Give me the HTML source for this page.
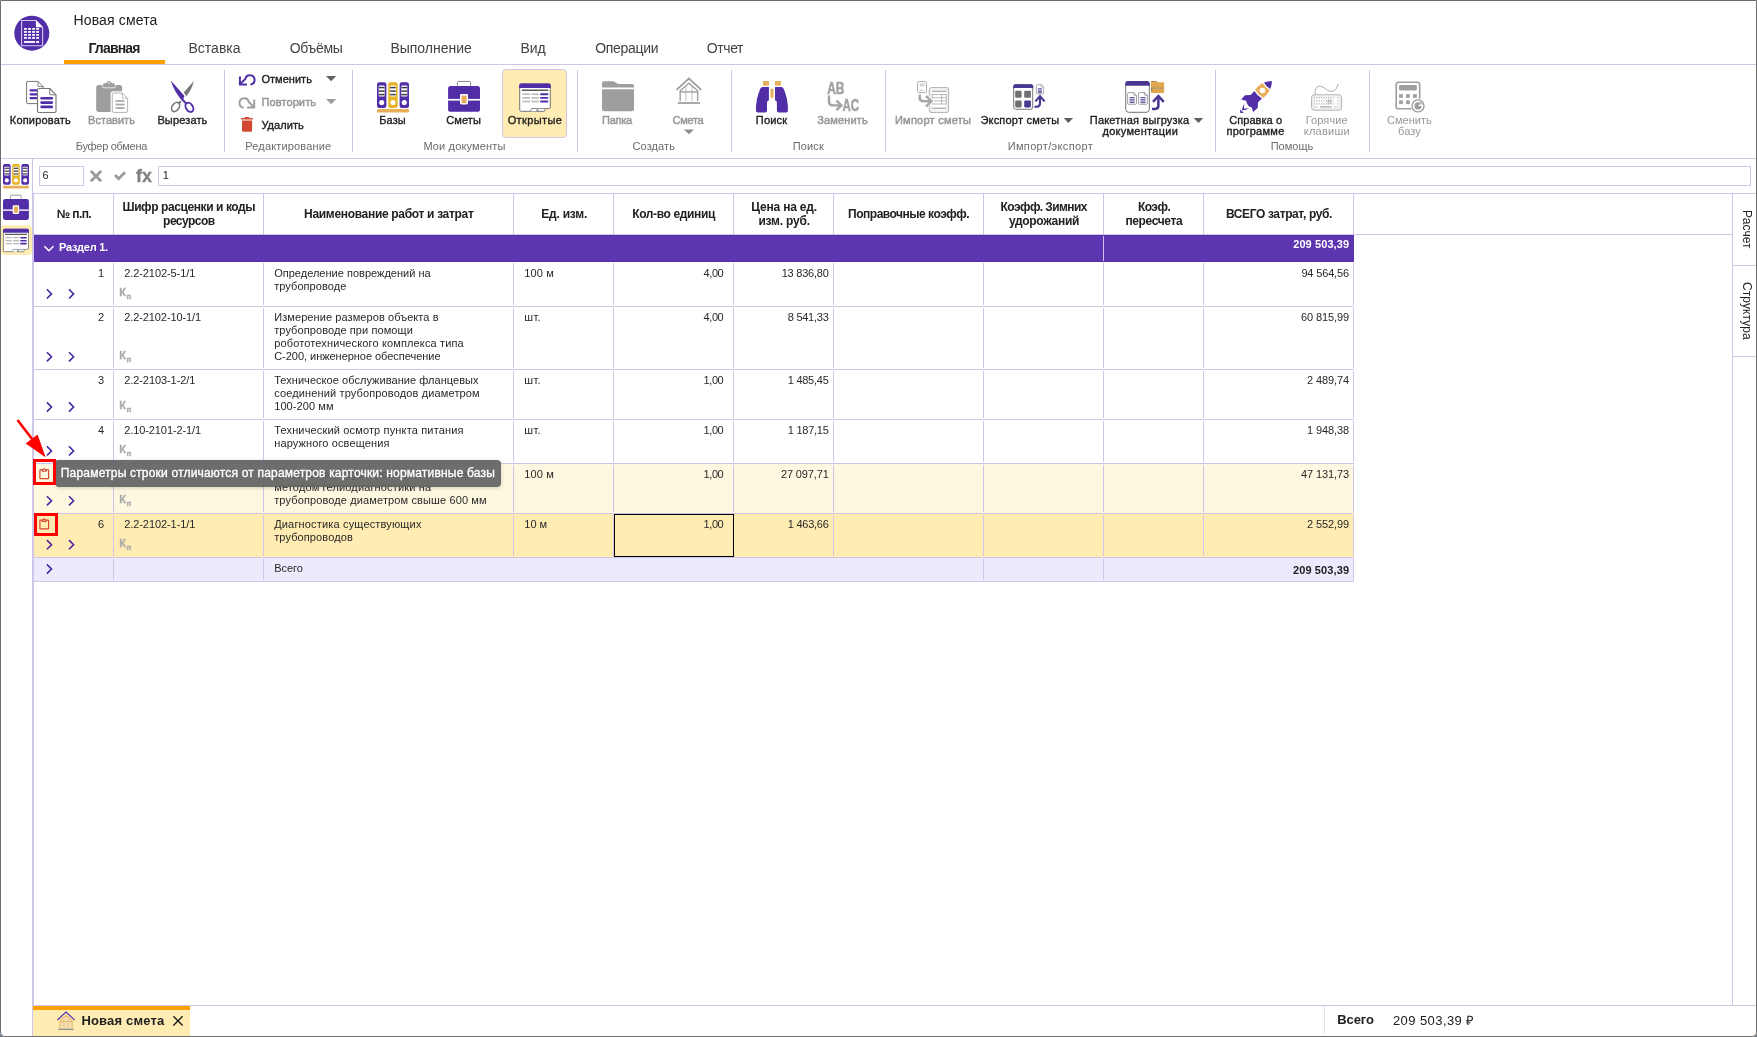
<!DOCTYPE html>
<html lang="ru"><head><meta charset="utf-8"><title>Новая смета</title>
<style>
html,body{margin:0;padding:0;background:#fff;}
body{width:1757px;height:1037px;overflow:hidden;position:relative;font-family:"Liberation Sans", sans-serif;}
#app{position:absolute;left:0;top:0;width:1757px;height:1037px;overflow:hidden;will-change:transform;}
.t{position:absolute;white-space:nowrap;font-family:"Liberation Sans", sans-serif;}
.b{position:absolute;}
.l{position:absolute;background:#d1c4e9;}
svg{position:absolute;overflow:visible;}
</style></head><body><div id="app">
<div class="b" style="left:64px;top:60px;width:101px;height:4px;background:#ffa000;"></div>
<div class="b" style="left:1px;top:64px;width:1755px;height:1px;background:#d1c4e9;"></div>
<div class="b" style="left:1px;top:158px;width:1755px;height:1px;background:#d1c4e9;"></div>
<div class="b" style="left:224px;top:70px;width:1px;height:82px;background:#d1c4e9;"></div>
<div class="b" style="left:352px;top:70px;width:1px;height:82px;background:#d1c4e9;"></div>
<div class="b" style="left:577px;top:70px;width:1px;height:82px;background:#d1c4e9;"></div>
<div class="b" style="left:731px;top:70px;width:1px;height:82px;background:#d1c4e9;"></div>
<div class="b" style="left:885px;top:70px;width:1px;height:82px;background:#d1c4e9;"></div>
<div class="b" style="left:1215px;top:70px;width:1px;height:82px;background:#d1c4e9;"></div>
<div class="b" style="left:1369px;top:70px;width:1px;height:82px;background:#d1c4e9;"></div>
<div class="b" style="left:502px;top:69px;width:63px;height:67px;background:#ffecb3;border:1px solid #d1c4e9;border-radius:4px;"></div>
<div class="b" style="left:32px;top:159px;width:1px;height:878px;background:#d1c4e9;"></div>
<div class="b" style="left:1px;top:225px;width:31px;height:30px;background:#ffecb3;border-radius:4px;"></div>
<div class="b" style="left:39px;top:166px;width:43px;height:18px;background:#fff;border:1px solid #d1c4e9;"></div>
<div class="b" style="left:158px;top:166px;width:1591px;height:18px;background:#fff;border:1px solid #d1c4e9;"></div>
<div class="b" style="left:33px;top:193px;width:1723px;height:1px;background:#d1c4e9;"></div>
<div class="b" style="left:33px;top:194px;width:1px;height:811px;background:#d1c4e9;"></div>
<div class="b" style="left:33px;top:234px;width:1699px;height:1px;background:#d1c4e9;"></div>
<div class="b" style="left:1732px;top:194px;width:1px;height:811px;background:#d1c4e9;"></div>
<div class="b" style="left:1733px;top:265px;width:23px;height:1px;background:#d1c4e9;"></div>
<div class="b" style="left:1733px;top:356px;width:23px;height:1px;background:#d1c4e9;"></div>
<div class="b" style="left:34px;top:235px;width:1320px;height:27px;background:#5e35b1;"></div>
<div class="b" style="left:34px;top:464px;width:1320px;height:49px;background:#fff8e1;"></div>
<div class="b" style="left:34px;top:514px;width:1320px;height:43px;background:#ffecb3;"></div>
<div class="b" style="left:34px;top:558px;width:1320px;height:23px;background:#eeeafd;"></div>
<div class="b" style="left:113px;top:194px;width:1px;height:40px;background:#d1c4e9;"></div>
<div class="b" style="left:263px;top:194px;width:1px;height:40px;background:#d1c4e9;"></div>
<div class="b" style="left:513px;top:194px;width:1px;height:40px;background:#d1c4e9;"></div>
<div class="b" style="left:613px;top:194px;width:1px;height:40px;background:#d1c4e9;"></div>
<div class="b" style="left:733px;top:194px;width:1px;height:40px;background:#d1c4e9;"></div>
<div class="b" style="left:833px;top:194px;width:1px;height:40px;background:#d1c4e9;"></div>
<div class="b" style="left:983px;top:194px;width:1px;height:40px;background:#d1c4e9;"></div>
<div class="b" style="left:1103px;top:194px;width:1px;height:40px;background:#d1c4e9;"></div>
<div class="b" style="left:1203px;top:194px;width:1px;height:40px;background:#d1c4e9;"></div>
<div class="b" style="left:1353px;top:194px;width:1px;height:40px;background:#d1c4e9;"></div>
<div class="b" style="left:1103px;top:235px;width:1px;height:27px;background:#cfc0ee;"></div>
<div class="b" style="left:34px;top:306px;width:1320px;height:1px;background:#d1c4e9;"></div>
<div class="b" style="left:34px;top:369px;width:1320px;height:1px;background:#d1c4e9;"></div>
<div class="b" style="left:34px;top:419px;width:1320px;height:1px;background:#d1c4e9;"></div>
<div class="b" style="left:34px;top:463px;width:1320px;height:1px;background:#d1c4e9;"></div>
<div class="b" style="left:34px;top:513px;width:1320px;height:1px;background:#d1c4e9;"></div>
<div class="b" style="left:34px;top:557px;width:1320px;height:1px;background:#d1c4e9;"></div>
<div class="b" style="left:34px;top:581px;width:1320px;height:1px;background:#d1c4e9;"></div>
<div class="b" style="left:34px;top:235px;width:1320px;height:27px;background:#5e35b1;"></div>
<div class="b" style="left:34px;top:235px;width:1320px;height:1px;background:#5430ac;"></div>
<div class="b" style="left:34px;top:261px;width:1320px;height:1px;background:#5430ac;"></div>
<div class="b" style="left:1103px;top:236px;width:1px;height:25px;background:#cfc0ee;"></div>
<div class="b" style="left:113px;top:263px;width:1px;height:42px;background:#d1c4e9;"></div>
<div class="b" style="left:263px;top:263px;width:1px;height:42px;background:#d1c4e9;"></div>
<div class="b" style="left:513px;top:263px;width:1px;height:42px;background:#d1c4e9;"></div>
<div class="b" style="left:613px;top:263px;width:1px;height:42px;background:#d1c4e9;"></div>
<div class="b" style="left:733px;top:263px;width:1px;height:42px;background:#d1c4e9;"></div>
<div class="b" style="left:833px;top:263px;width:1px;height:42px;background:#d1c4e9;"></div>
<div class="b" style="left:983px;top:263px;width:1px;height:42px;background:#d1c4e9;"></div>
<div class="b" style="left:1103px;top:263px;width:1px;height:42px;background:#d1c4e9;"></div>
<div class="b" style="left:1203px;top:263px;width:1px;height:42px;background:#d1c4e9;"></div>
<div class="b" style="left:1353px;top:263px;width:1px;height:42px;background:#d1c4e9;"></div>
<div class="b" style="left:113px;top:308px;width:1px;height:60px;background:#d1c4e9;"></div>
<div class="b" style="left:263px;top:308px;width:1px;height:60px;background:#d1c4e9;"></div>
<div class="b" style="left:513px;top:308px;width:1px;height:60px;background:#d1c4e9;"></div>
<div class="b" style="left:613px;top:308px;width:1px;height:60px;background:#d1c4e9;"></div>
<div class="b" style="left:733px;top:308px;width:1px;height:60px;background:#d1c4e9;"></div>
<div class="b" style="left:833px;top:308px;width:1px;height:60px;background:#d1c4e9;"></div>
<div class="b" style="left:983px;top:308px;width:1px;height:60px;background:#d1c4e9;"></div>
<div class="b" style="left:1103px;top:308px;width:1px;height:60px;background:#d1c4e9;"></div>
<div class="b" style="left:1203px;top:308px;width:1px;height:60px;background:#d1c4e9;"></div>
<div class="b" style="left:1353px;top:308px;width:1px;height:60px;background:#d1c4e9;"></div>
<div class="b" style="left:113px;top:371px;width:1px;height:47px;background:#d1c4e9;"></div>
<div class="b" style="left:263px;top:371px;width:1px;height:47px;background:#d1c4e9;"></div>
<div class="b" style="left:513px;top:371px;width:1px;height:47px;background:#d1c4e9;"></div>
<div class="b" style="left:613px;top:371px;width:1px;height:47px;background:#d1c4e9;"></div>
<div class="b" style="left:733px;top:371px;width:1px;height:47px;background:#d1c4e9;"></div>
<div class="b" style="left:833px;top:371px;width:1px;height:47px;background:#d1c4e9;"></div>
<div class="b" style="left:983px;top:371px;width:1px;height:47px;background:#d1c4e9;"></div>
<div class="b" style="left:1103px;top:371px;width:1px;height:47px;background:#d1c4e9;"></div>
<div class="b" style="left:1203px;top:371px;width:1px;height:47px;background:#d1c4e9;"></div>
<div class="b" style="left:1353px;top:371px;width:1px;height:47px;background:#d1c4e9;"></div>
<div class="b" style="left:113px;top:421px;width:1px;height:41px;background:#d1c4e9;"></div>
<div class="b" style="left:263px;top:421px;width:1px;height:41px;background:#d1c4e9;"></div>
<div class="b" style="left:513px;top:421px;width:1px;height:41px;background:#d1c4e9;"></div>
<div class="b" style="left:613px;top:421px;width:1px;height:41px;background:#d1c4e9;"></div>
<div class="b" style="left:733px;top:421px;width:1px;height:41px;background:#d1c4e9;"></div>
<div class="b" style="left:833px;top:421px;width:1px;height:41px;background:#d1c4e9;"></div>
<div class="b" style="left:983px;top:421px;width:1px;height:41px;background:#d1c4e9;"></div>
<div class="b" style="left:1103px;top:421px;width:1px;height:41px;background:#d1c4e9;"></div>
<div class="b" style="left:1203px;top:421px;width:1px;height:41px;background:#d1c4e9;"></div>
<div class="b" style="left:1353px;top:421px;width:1px;height:41px;background:#d1c4e9;"></div>
<div class="b" style="left:113px;top:465px;width:1px;height:47px;background:#d1c4e9;"></div>
<div class="b" style="left:263px;top:465px;width:1px;height:47px;background:#d1c4e9;"></div>
<div class="b" style="left:513px;top:465px;width:1px;height:47px;background:#d1c4e9;"></div>
<div class="b" style="left:613px;top:465px;width:1px;height:47px;background:#d1c4e9;"></div>
<div class="b" style="left:733px;top:465px;width:1px;height:47px;background:#d1c4e9;"></div>
<div class="b" style="left:833px;top:465px;width:1px;height:47px;background:#d1c4e9;"></div>
<div class="b" style="left:983px;top:465px;width:1px;height:47px;background:#d1c4e9;"></div>
<div class="b" style="left:1103px;top:465px;width:1px;height:47px;background:#d1c4e9;"></div>
<div class="b" style="left:1203px;top:465px;width:1px;height:47px;background:#d1c4e9;"></div>
<div class="b" style="left:1353px;top:465px;width:1px;height:47px;background:#d1c4e9;"></div>
<div class="b" style="left:113px;top:515px;width:1px;height:41px;background:#d1c4e9;"></div>
<div class="b" style="left:263px;top:515px;width:1px;height:41px;background:#d1c4e9;"></div>
<div class="b" style="left:513px;top:515px;width:1px;height:41px;background:#d1c4e9;"></div>
<div class="b" style="left:613px;top:515px;width:1px;height:41px;background:#d1c4e9;"></div>
<div class="b" style="left:733px;top:515px;width:1px;height:41px;background:#d1c4e9;"></div>
<div class="b" style="left:833px;top:515px;width:1px;height:41px;background:#d1c4e9;"></div>
<div class="b" style="left:983px;top:515px;width:1px;height:41px;background:#d1c4e9;"></div>
<div class="b" style="left:1103px;top:515px;width:1px;height:41px;background:#d1c4e9;"></div>
<div class="b" style="left:1203px;top:515px;width:1px;height:41px;background:#d1c4e9;"></div>
<div class="b" style="left:1353px;top:515px;width:1px;height:41px;background:#d1c4e9;"></div>
<div class="b" style="left:113px;top:559px;width:1px;height:21px;background:#d1c4e9;"></div>
<div class="b" style="left:263px;top:559px;width:1px;height:21px;background:#d1c4e9;"></div>
<div class="b" style="left:983px;top:559px;width:1px;height:21px;background:#d1c4e9;"></div>
<div class="b" style="left:1103px;top:559px;width:1px;height:21px;background:#d1c4e9;"></div>
<div class="b" style="left:1353px;top:559px;width:1px;height:21px;background:#d1c4e9;"></div>
<div class="b" style="left:614px;top:514px;width:118px;height:41px;background:transparent;border:1px solid #000;"></div>
<div class="b" style="left:33px;top:1005px;width:1723px;height:1px;background:#d1c4e9;"></div>
<div class="b" style="left:33px;top:1006px;width:157px;height:4px;background:#ffa000;"></div>
<div class="b" style="left:33px;top:1010px;width:157px;height:26px;background:#ffecb3;"></div>
<div class="b" style="left:1324px;top:1006px;width:1px;height:28px;background:#e4e4e4;"></div>
<svg style="left:0;top:0;z-index:5" width="1757" height="1037" viewBox="0 0 1757 1037"><circle cx="31.8" cy="33.2" r="17.5" fill="#512da8"/><path d="M21.6,20.5 L35.9,20.5 L42.6,27.2 L42.6,45.8 L21.6,45.8 Z" fill="none" stroke="#d4c9ef" stroke-width="1.1" stroke-linejoin="round"/><path d="M35.9,20.5 L42.6,27.2 L35.9,27.2 Z" fill="#fff"/><rect x="24.00" y="28.05" width="2.9" height="1.75" fill="#fff"/><rect x="28.05" y="28.05" width="2.9" height="1.75" fill="#fff"/><rect x="32.10" y="28.05" width="2.9" height="1.75" fill="#fff"/><rect x="36.15" y="28.05" width="2.9" height="1.75" fill="#fff"/><rect x="24.00" y="31.05" width="2.9" height="1.75" fill="#fff"/><rect x="28.05" y="31.05" width="2.9" height="1.75" fill="#fff"/><rect x="32.10" y="31.05" width="2.9" height="1.75" fill="#fff"/><rect x="36.15" y="31.05" width="2.9" height="1.75" fill="#fff"/><rect x="24.00" y="34.05" width="2.9" height="1.75" fill="#fff"/><rect x="28.05" y="34.05" width="2.9" height="1.75" fill="#fff"/><rect x="32.10" y="34.05" width="2.9" height="1.75" fill="#fff"/><rect x="36.15" y="34.05" width="2.9" height="1.75" fill="#fff"/><rect x="24.00" y="37.05" width="2.9" height="1.75" fill="#fff"/><rect x="28.05" y="37.05" width="2.9" height="1.75" fill="#fff"/><rect x="32.10" y="37.05" width="2.9" height="1.75" fill="#fff"/><rect x="36.15" y="37.05" width="2.9" height="1.75" fill="#fff"/><rect x="24" y="41.05" width="11" height="1.85" fill="#fff"/><rect x="36.15" y="41.05" width="2.9" height="1.85" fill="#fff"/>
<path d="M28.1,81.4 L38.0,81.4 L43.2,86.60000000000001 L43.2,102.1 Q43.2,103.6 41.7,103.6 L28.1,103.6 Q26.6,103.6 26.6,102.1 L26.6,82.9 Q26.6,81.4 28.1,81.4 Z" fill="#fff" stroke="#757575" stroke-width="1" stroke-linejoin="round"/><path d="M38.0,81.4 L38.0,86.00000000000001 Q38.0,86.60000000000001 38.6,86.60000000000001 L43.2,86.60000000000001" fill="none" stroke="#757575" stroke-width="0.9"/><line x1="30.6" y1="90.4" x2="41" y2="90.4" stroke="#512da8" stroke-width="2.3" stroke-linecap="round"/><line x1="30.6" y1="94.3" x2="41" y2="94.3" stroke="#512da8" stroke-width="2.3" stroke-linecap="round"/><line x1="30.6" y1="98.2" x2="41" y2="98.2" stroke="#512da8" stroke-width="2.3" stroke-linecap="round"/><path d="M39.0,88.5 L49.7,88.5 L56.0,94.8 L56.0,111.0 Q56.0,112.5 54.5,112.5 L39.0,112.5 Q37.5,112.5 37.5,111.0 L37.5,90.0 Q37.5,88.5 39.0,88.5 Z" fill="#fff" stroke="#757575" stroke-width="1.1" stroke-linejoin="round"/><path d="M49.7,88.5 L49.7,94.2 Q49.7,94.8 50.300000000000004,94.8 L56.0,94.8" fill="none" stroke="#757575" stroke-width="0.9900000000000001"/><line x1="41.6" y1="98.2" x2="51.8" y2="98.2" stroke="#512da8" stroke-width="2.6" stroke-linecap="round"/><line x1="41.6" y1="102.6" x2="51.8" y2="102.6" stroke="#512da8" stroke-width="2.6" stroke-linecap="round"/><line x1="41.6" y1="106.9" x2="51.8" y2="106.9" stroke="#512da8" stroke-width="2.6" stroke-linecap="round"/>
<rect x="96.2" y="84.9" width="25.9" height="27" rx="2.6" fill="#9e9e9e"/><path d="M103,86.6 L103,84.6 Q103,83.4 104.4,83.2 L106.4,83 Q107,81 108.9,81 Q110.9,81 111.4,83 L113.5,83.2 Q114.9,83.4 114.9,84.6 L114.9,86.6 Q114.9,87.6 113.6,87.6 L104.3,87.6 Q103,87.6 103,86.6 Z" fill="#9e9e9e" stroke="#fff" stroke-width="1.3" paint-order="stroke"/><circle cx="108.9" cy="83.1" r="0.8" fill="#fff"/><rect x="110.6" y="91.3" width="18.6" height="22.7" rx="2.5" fill="#fff"/><path d="M113.8,93.0 L122.39999999999999,93.0 L127.6,98.2 L127.6,110.9 Q127.6,112.4 126.1,112.4 L113.8,112.4 Q112.3,112.4 112.3,110.9 L112.3,94.5 Q112.3,93.0 113.8,93.0 Z" fill="#fff" stroke="#b4b4b4" stroke-width="1.0" stroke-linejoin="round"/><path d="M122.39999999999999,93.0 L122.39999999999999,97.60000000000001 Q122.39999999999999,98.2 122.99999999999999,98.2 L127.6,98.2" fill="none" stroke="#b4b4b4" stroke-width="0.9"/><line x1="115.5" y1="101.0" x2="124.6" y2="101.0" stroke="#a6a6a6" stroke-width="1.7" stroke-linecap="butt"/><line x1="115.5" y1="104.5" x2="124.6" y2="104.5" stroke="#a6a6a6" stroke-width="1.7" stroke-linecap="butt"/><line x1="115.5" y1="108.1" x2="124.6" y2="108.1" stroke="#a6a6a6" stroke-width="1.7" stroke-linecap="butt"/>
<path d="M193.8,80.9 L183.7,92.4 L186.4,96.2 Q192.2,88.6 193.8,80.9 Z" fill="#787878"/><path d="M181.0,101.2 L178.6,103.4" stroke="#787878" stroke-width="2.0" fill="none"/><ellipse cx="175.6" cy="107.0" rx="3.4" ry="5.1" transform="rotate(36 175.6 107.0)" fill="none" stroke="#787878" stroke-width="1.6"/><path d="M170.8,80.6 L184.5,95.9 L183.6,97.9 L183.4,99.0 L186.6,102.8 L185.2,104.0 L181.0,99.6 Q177.6,95.0 175.5,91.4 Q172.6,86.6 170.8,80.6 Z" fill="#512da8"/><ellipse cx="189.4" cy="107.3" rx="3.4" ry="5.0" transform="rotate(-33 189.4 107.3)" fill="none" stroke="#512da8" stroke-width="1.9"/>
<path d="M251.3,84.4 A4.7,4.7 0 1 0 245.3,78.9 L240.4,83.9" fill="none" stroke="#512da8" stroke-width="2.0" stroke-linecap="round"/><path d="M239.9,76.6 L239.9,84.5 L247.0,84.5" fill="none" stroke="#512da8" stroke-width="2.0" stroke-linecap="butt" stroke-linejoin="miter"/><path d="M242.8,107.5 A4.7,4.7 0 1 1 248.8,102.0 L253.7,106.9" fill="none" stroke="#9e9e9e" stroke-width="2.0" stroke-linecap="round"/><path d="M254.2,99.5 L254.2,107.5 L247.1,107.5" fill="none" stroke="#9e9e9e" stroke-width="2.0" stroke-linecap="butt" stroke-linejoin="miter"/><rect x="240.9" y="117.9" width="12.0" height="1.7" rx="0.5" fill="#d1472f"/><rect x="244.7" y="117.0" width="4.4" height="1.4" rx="0.6" fill="#d1472f"/><path d="M242,120.6 L252.1,120.6 L252.1,130.2 Q252.1,131.8 250.5,131.8 L243.6,131.8 Q242,131.8 242,130.2 Z" fill="#d1472f"/><path d="M326.0,76.0 L336.2,76.0 L331.1,81.3 Z" fill="#616161"/><path d="M326.0,99.0 L336.2,99.0 L331.1,104.2 Z" fill="#9e9e9e"/>
<rect x="377.0" y="82.2" width="9.4" height="25.8" rx="2.2" fill="#512da8"/><rect x="378.7" y="85.6" width="6.0" height="10.9" rx="0.8" fill="#fff"/><line x1="378.9" y1="87.6" x2="384.5" y2="87.6" stroke="#3c3c3c" stroke-width="1.5" stroke-linecap="butt"/><line x1="378.9" y1="91.1" x2="384.5" y2="91.1" stroke="#3c3c3c" stroke-width="1.5" stroke-linecap="butt"/><line x1="378.9" y1="94.6" x2="384.5" y2="94.6" stroke="#3c3c3c" stroke-width="1.5" stroke-linecap="butt"/><circle cx="381.7" cy="102.5" r="2.55" fill="#fff"/><rect x="388.25" y="82.2" width="9.4" height="25.8" rx="2.2" fill="#e6b422"/><rect x="389.95" y="85.6" width="6.0" height="10.9" rx="0.8" fill="#fff"/><line x1="390.15" y1="87.6" x2="395.75" y2="87.6" stroke="#3c3c3c" stroke-width="1.5" stroke-linecap="butt"/><line x1="390.15" y1="91.1" x2="395.75" y2="91.1" stroke="#3c3c3c" stroke-width="1.5" stroke-linecap="butt"/><line x1="390.15" y1="94.6" x2="395.75" y2="94.6" stroke="#3c3c3c" stroke-width="1.5" stroke-linecap="butt"/><circle cx="392.95" cy="102.5" r="2.55" fill="#fff"/><rect x="399.6" y="82.2" width="9.4" height="25.8" rx="2.2" fill="#512da8"/><rect x="401.3" y="85.6" width="6.0" height="10.9" rx="0.8" fill="#fff"/><line x1="401.5" y1="87.6" x2="407.1" y2="87.6" stroke="#3c3c3c" stroke-width="1.5" stroke-linecap="butt"/><line x1="401.5" y1="91.1" x2="407.1" y2="91.1" stroke="#3c3c3c" stroke-width="1.5" stroke-linecap="butt"/><line x1="401.5" y1="94.6" x2="407.1" y2="94.6" stroke="#3c3c3c" stroke-width="1.5" stroke-linecap="butt"/><circle cx="404.3" cy="102.5" r="2.55" fill="#fff"/><rect x="377" y="109.1" width="32" height="3.5" rx="1.2" fill="#e8ae5b"/>
<path d="M457.4,85.6 L457.4,82.8 Q457.4,81.4 458.8,81.4 L469.2,81.4 Q470.6,81.4 470.6,82.8 L470.6,85.6" fill="none" stroke="#757575" stroke-width="0.9"/><rect x="448.1" y="86.1" width="31.9" height="25.7" rx="2.6" fill="#512da8"/><rect x="448.1" y="98.9" width="31.9" height="1.7" fill="#fff"/><rect x="460.0" y="93.9" width="8.0" height="10.6" rx="1.4" fill="#fff"/><rect x="461.6" y="95.4" width="5.0" height="7.7" rx="0.6" fill="#e8ae5b"/>
<path d="M521.2,83.9 L548.8,83.9 Q550.3,83.9 550.3,85.4 L550.3,107.0 Q550.3,108.5 548.8,108.5 L545.5,108.5 L544.3,111.3 L521.2,111.3 Q519.7,111.3 519.7,109.8 L519.7,85.4 Q519.7,83.9 521.2,83.9 Z" fill="#fff" stroke="#757575" stroke-width="1"/><path d="M519.2,88.1 L519.2,85.4 Q519.2,83.4 521.2,83.4 L548.8,83.4 Q550.8,83.4 550.8,85.4 L550.8,88.1 Z" fill="#512da8"/><line x1="522.4" y1="90.3" x2="547.7" y2="90.3" stroke="#5a5a5a" stroke-width="1.6" stroke-linecap="round"/><line x1="522.2" y1="94.2" x2="530.0" y2="94.2" stroke="#bdbdbd" stroke-width="1.7" stroke-linecap="butt"/><line x1="531.5" y1="94.2" x2="538.9" y2="94.2" stroke="#bdbdbd" stroke-width="1.7" stroke-linecap="butt"/><line x1="541.0" y1="94.2" x2="547.4" y2="94.2" stroke="#512da8" stroke-width="1.9" stroke-linecap="round"/><line x1="522.2" y1="97.9" x2="530.0" y2="97.9" stroke="#bdbdbd" stroke-width="1.7" stroke-linecap="butt"/><line x1="531.5" y1="97.9" x2="538.9" y2="97.9" stroke="#bdbdbd" stroke-width="1.7" stroke-linecap="butt"/><line x1="541.0" y1="97.9" x2="547.4" y2="97.9" stroke="#512da8" stroke-width="1.9" stroke-linecap="round"/><line x1="522.2" y1="101.5" x2="530.0" y2="101.5" stroke="#bdbdbd" stroke-width="1.7" stroke-linecap="butt"/><line x1="531.5" y1="101.5" x2="538.9" y2="101.5" stroke="#bdbdbd" stroke-width="1.7" stroke-linecap="butt"/><line x1="541.0" y1="101.5" x2="547.4" y2="101.5" stroke="#512da8" stroke-width="1.9" stroke-linecap="round"/><path d="M530.6,111.3 L531.6,108.5 L537.6,108.5 L536.6,111.3" fill="#fff" stroke="#757575" stroke-width="0.8"/><path d="M537.4,111.3 L538.4,108.5 L545.0,108.5" fill="none" stroke="#757575" stroke-width="0.8"/>
<g transform="translate(3.0,163.9) scale(0.812) translate(-377,-82.2)"><rect x="377.0" y="82.2" width="9.4" height="25.8" rx="2.2" fill="#512da8"/><rect x="378.7" y="85.6" width="6.0" height="10.9" rx="0.8" fill="#fff"/><line x1="378.9" y1="87.6" x2="384.5" y2="87.6" stroke="#3c3c3c" stroke-width="1.5" stroke-linecap="butt"/><line x1="378.9" y1="91.1" x2="384.5" y2="91.1" stroke="#3c3c3c" stroke-width="1.5" stroke-linecap="butt"/><line x1="378.9" y1="94.6" x2="384.5" y2="94.6" stroke="#3c3c3c" stroke-width="1.5" stroke-linecap="butt"/><circle cx="381.7" cy="102.5" r="2.55" fill="#fff"/><rect x="388.25" y="82.2" width="9.4" height="25.8" rx="2.2" fill="#e6b422"/><rect x="389.95" y="85.6" width="6.0" height="10.9" rx="0.8" fill="#fff"/><line x1="390.15" y1="87.6" x2="395.75" y2="87.6" stroke="#3c3c3c" stroke-width="1.5" stroke-linecap="butt"/><line x1="390.15" y1="91.1" x2="395.75" y2="91.1" stroke="#3c3c3c" stroke-width="1.5" stroke-linecap="butt"/><line x1="390.15" y1="94.6" x2="395.75" y2="94.6" stroke="#3c3c3c" stroke-width="1.5" stroke-linecap="butt"/><circle cx="392.95" cy="102.5" r="2.55" fill="#fff"/><rect x="399.6" y="82.2" width="9.4" height="25.8" rx="2.2" fill="#512da8"/><rect x="401.3" y="85.6" width="6.0" height="10.9" rx="0.8" fill="#fff"/><line x1="401.5" y1="87.6" x2="407.1" y2="87.6" stroke="#3c3c3c" stroke-width="1.5" stroke-linecap="butt"/><line x1="401.5" y1="91.1" x2="407.1" y2="91.1" stroke="#3c3c3c" stroke-width="1.5" stroke-linecap="butt"/><line x1="401.5" y1="94.6" x2="407.1" y2="94.6" stroke="#3c3c3c" stroke-width="1.5" stroke-linecap="butt"/><circle cx="404.3" cy="102.5" r="2.55" fill="#fff"/><rect x="377" y="109.1" width="32" height="3.5" rx="1.2" fill="#e8ae5b"/></g>
<g transform="translate(3.0,194.9) scale(0.812) translate(-448.1,-81.0)"><path d="M457.4,85.6 L457.4,82.8 Q457.4,81.4 458.8,81.4 L469.2,81.4 Q470.6,81.4 470.6,82.8 L470.6,85.6" fill="none" stroke="#757575" stroke-width="0.9"/><rect x="448.1" y="86.1" width="31.9" height="25.7" rx="2.6" fill="#512da8"/><rect x="448.1" y="98.9" width="31.9" height="1.7" fill="#fff"/><rect x="460.0" y="93.9" width="8.0" height="10.6" rx="1.4" fill="#fff"/><rect x="461.6" y="95.4" width="5.0" height="7.7" rx="0.6" fill="#e8ae5b"/></g>
<g transform="translate(3.0,228.8) scale(0.82) translate(-519.2,-83.4)"><path d="M521.2,83.9 L548.8,83.9 Q550.3,83.9 550.3,85.4 L550.3,107.0 Q550.3,108.5 548.8,108.5 L545.5,108.5 L544.3,111.3 L521.2,111.3 Q519.7,111.3 519.7,109.8 L519.7,85.4 Q519.7,83.9 521.2,83.9 Z" fill="#fff" stroke="#757575" stroke-width="1"/><path d="M519.2,88.1 L519.2,85.4 Q519.2,83.4 521.2,83.4 L548.8,83.4 Q550.8,83.4 550.8,85.4 L550.8,88.1 Z" fill="#512da8"/><line x1="522.4" y1="90.3" x2="547.7" y2="90.3" stroke="#5a5a5a" stroke-width="1.6" stroke-linecap="round"/><line x1="522.2" y1="94.2" x2="530.0" y2="94.2" stroke="#bdbdbd" stroke-width="1.7" stroke-linecap="butt"/><line x1="531.5" y1="94.2" x2="538.9" y2="94.2" stroke="#bdbdbd" stroke-width="1.7" stroke-linecap="butt"/><line x1="541.0" y1="94.2" x2="547.4" y2="94.2" stroke="#512da8" stroke-width="1.9" stroke-linecap="round"/><line x1="522.2" y1="97.9" x2="530.0" y2="97.9" stroke="#bdbdbd" stroke-width="1.7" stroke-linecap="butt"/><line x1="531.5" y1="97.9" x2="538.9" y2="97.9" stroke="#bdbdbd" stroke-width="1.7" stroke-linecap="butt"/><line x1="541.0" y1="97.9" x2="547.4" y2="97.9" stroke="#512da8" stroke-width="1.9" stroke-linecap="round"/><line x1="522.2" y1="101.5" x2="530.0" y2="101.5" stroke="#bdbdbd" stroke-width="1.7" stroke-linecap="butt"/><line x1="531.5" y1="101.5" x2="538.9" y2="101.5" stroke="#bdbdbd" stroke-width="1.7" stroke-linecap="butt"/><line x1="541.0" y1="101.5" x2="547.4" y2="101.5" stroke="#512da8" stroke-width="1.9" stroke-linecap="round"/><path d="M530.6,111.3 L531.6,108.5 L537.6,108.5 L536.6,111.3" fill="#fff" stroke="#757575" stroke-width="0.8"/><path d="M537.4,111.3 L538.4,108.5 L545.0,108.5" fill="none" stroke="#757575" stroke-width="0.8"/></g>
<path d="M602,87.5 L602,83.3 Q602,81.3 604,81.3 L612.6,81.3 Q614,81.3 615.2,82.2 L617.4,83.6 Q618.2,84 619.2,84 L632,84 Q634,84 634,86 L634,87.5 Z" fill="#9e9e9e"/><path d="M602,89.3 L634,89.3 L634,109.0 Q634,111.2 631.8,111.2 L604.2,111.2 Q602,111.2 602,109.0 Z" fill="#9e9e9e"/>
<path d="M685.9,86.6 L685.9,100.9" stroke="#cccccc" stroke-width="1.3"/><path d="M692.0,86.6 L692.0,100.9" stroke="#cccccc" stroke-width="1.3"/><path d="M676.5,89.9 L688.9,78.5 L701.3,89.9" fill="none" stroke="#a0a0a0" stroke-width="1.7" stroke-linejoin="miter"/><path d="M680.2,100.9 L680.2,90.8 L689.0,83.3 L697.7,90.8 L697.7,100.9" fill="none" stroke="#a3a3a3" stroke-width="1.45"/><path d="M680.2,91.9 L697.7,91.9" stroke="#a3a3a3" stroke-width="1.5"/><rect x="677.9" y="102.1" width="22.1" height="1.8" fill="#a0a0a0"/>
<path d="M683.9,129.4 L694.0,129.4 L688.95,134.2 Z" fill="#8e8e8e"/>
<g transform="translate(57.4,1012.4) scale(0.7) translate(-676.6,-78.9)"><path d="M680,101.5 L680,90.4 L688.9,83.2 L697.9,90.4 L697.9,101.5 Z" fill="#f6dcae"/><path d="M685.9,86.6 L685.9,100.9" stroke="#eccb92" stroke-width="1.3"/><path d="M692.0,86.6 L692.0,100.9" stroke="#eccb92" stroke-width="1.3"/><path d="M676.5,89.9 L688.9,78.5 L701.3,89.9" fill="none" stroke="#512da8" stroke-width="1.7" stroke-linejoin="miter"/><path d="M680.2,100.9 L680.2,90.8 L689.0,83.3 L697.7,90.8 L697.7,100.9" fill="none" stroke="#e7b96e" stroke-width="1.45"/><path d="M680.2,91.9 L697.7,91.9" stroke="#e7b96e" stroke-width="1.5"/><rect x="677.9" y="102.1" width="22.1" height="1.8" fill="#8a8a8a"/></g>
<rect x="762.9" y="81.0" width="6.0" height="4.7" fill="#e8ae5b"/><rect x="774.9" y="81.0" width="6.0" height="4.7" fill="#e8ae5b"/><rect x="770.5" y="88.7" width="3.0" height="9.0" fill="#e8ae5b"/><path d="M762.6,86.9 L768.9,86.9 L768.9,100.2 Q767.2,100.6 767.0,102.4 L767.0,110.6 Q767.0,112.6 765.0,112.6 L757.9,112.6 Q755.9,112.6 755.9,110.6 Q755.9,98.0 760.4,88.4 Q761.0,86.9 762.6,86.9 Z" fill="#512da8"/><path d="M781.3,86.9 L775.0,86.9 L775.0,100.2 Q776.7,100.6 776.9,102.4 L776.9,110.6 Q776.9,112.6 778.9,112.6 L786.0,112.6 Q788.0,112.6 788.0,110.6 Q788.0,98.0 783.5,88.4 Q782.9,86.9 781.3,86.9 Z" fill="#512da8"/>
<text x="827.2" y="93.5" font-family='"Liberation Sans", sans-serif' font-weight="bold" font-size="15.6" fill="#a3a3a3" stroke="#a3a3a3" stroke-width="0.55" textLength="17.2" lengthAdjust="spacingAndGlyphs">AB</text><text x="842.5" y="110.6" font-family='"Liberation Sans", sans-serif' font-weight="bold" font-size="15.6" fill="#a3a3a3" stroke="#a3a3a3" stroke-width="0.55" textLength="16.6" lengthAdjust="spacingAndGlyphs">AC</text><path d="M829.0,95.6 L829.0,101.6 Q829.0,105.4 832.8,105.4 L840.6,105.4" fill="none" stroke="#a3a3a3" stroke-width="2.4"/><path d="M836.4,100.6 L841.4,105.4 L836.4,110.2" fill="none" stroke="#a3a3a3" stroke-width="2.4"/>
<rect x="917.6" y="81.5" width="8.9" height="11.0" rx="1.3" fill="#fff" stroke="#a6a6a6" stroke-width="0.9"/><line x1="919.7" y1="84.0" x2="924.6" y2="84.0" stroke="#b4b4b4" stroke-width="0.9" stroke-linecap="butt"/><line x1="919.7" y1="85.8" x2="924.6" y2="85.8" stroke="#b4b4b4" stroke-width="0.9" stroke-linecap="butt"/><line x1="919.7" y1="90.2" x2="923.6" y2="90.2" stroke="#b4b4b4" stroke-width="0.9" stroke-linecap="butt"/><rect x="929.3" y="87.5" width="19.3" height="25.0" rx="2.8" fill="#fff" stroke="#b8b8b8" stroke-width="1.1"/><rect x="930.8" y="89.0" width="16.3" height="22.0" rx="1.8" fill="none" stroke="#d6d6d6" stroke-width="0.7"/><line x1="932.2" y1="91.3" x2="946.2" y2="91.3" stroke="#aaaaaa" stroke-width="1.3" stroke-linecap="butt"/><line x1="932.2" y1="108.3" x2="946.2" y2="108.3" stroke="#aaaaaa" stroke-width="1.3" stroke-linecap="butt"/><rect x="932.2" y="94.6" width="14.0" height="9.4" fill="none" stroke="#aaaaaa" stroke-width="0.8"/><line x1="932.2" y1="97.7" x2="946.2" y2="97.7" stroke="#aaaaaa" stroke-width="0.8" stroke-linecap="butt"/><line x1="932.2" y1="100.9" x2="946.2" y2="100.9" stroke="#aaaaaa" stroke-width="0.8" stroke-linecap="butt"/><path d="M941.6,94.6 L941.6,104.0" stroke="#aaaaaa" stroke-width="0.8"/><path d="M925.4,95.2 L931.4,101.2 L925.4,107.2" fill="none" stroke="#fff" stroke-width="4.4"/><path d="M919.7,94.6 L919.7,97.6 Q919.7,101.2 923.3,101.2 L930.2,101.2" fill="none" stroke="#a6a6a6" stroke-width="2.5"/><path d="M926.0,95.8 L931.4,101.2 L926.0,106.6" fill="none" stroke="#a6a6a6" stroke-width="2.5"/>
<rect x="1013.7" y="84.7" width="19.0" height="24.6" rx="2.2" fill="#fff" stroke="#757575" stroke-width="1"/><path d="M1013.2,87.9 L1013.2,86.2 Q1013.2,84.2 1015.2,84.2 L1031.2,84.2 Q1033.2,84.2 1033.2,86.2 L1033.2,87.9 Z" fill="#4a3791"/><rect x="1015.2" y="90.7" width="6.4" height="7.1" rx="1.1" fill="#6e6e73"/><rect x="1024.2" y="90.7" width="6.7" height="7.1" rx="1.1" fill="#6e6e73"/><rect x="1015.2" y="100.4" width="6.4" height="7.0" rx="1.1" fill="#6e6e73"/><rect x="1024.2" y="100.4" width="6.7" height="7.0" rx="1.1" fill="#4a3791"/><path d="M1037.3,84.6 L1041.1999999999998,84.6 L1043.6,87.0 L1043.6,93.0 Q1043.6,94.0 1042.6,94.0 L1037.3,94.0 Q1036.3,94.0 1036.3,93.0 L1036.3,85.6 Q1036.3,84.6 1037.3,84.6 Z" fill="#fff" stroke="#9a9a9a" stroke-width="0.8" stroke-linejoin="round"/><path d="M1041.1999999999998,84.6 L1041.1999999999998,86.4 Q1041.1999999999998,87.0 1041.7999999999997,87.0 L1043.6,87.0" fill="none" stroke="#9a9a9a" stroke-width="0.7200000000000001"/><line x1="1037.8" y1="88.7" x2="1042.0" y2="88.7" stroke="#4a3791" stroke-width="0.8" stroke-linecap="butt"/><line x1="1037.8" y1="90.1" x2="1042.0" y2="90.1" stroke="#4a3791" stroke-width="0.8" stroke-linecap="butt"/><line x1="1037.8" y1="91.5" x2="1042.0" y2="91.5" stroke="#4a3791" stroke-width="0.8" stroke-linecap="butt"/><line x1="1037.8" y1="92.7" x2="1042.0" y2="92.7" stroke="#4a3791" stroke-width="0.8" stroke-linecap="butt"/><path d="M1034.4,106.7 L1036.8,106.7 Q1040.0,106.7 1040.0,103.3 L1040.0,96.8" fill="none" stroke="#4a3791" stroke-width="2.1"/><path d="M1035.4,101.4 L1040.0,96.19999999999999 L1044.6,101.4" fill="none" stroke="#4a3791" stroke-width="2.1" stroke-linejoin="miter"/>
<path d="M1063.7,118.1 L1073.1,118.1 L1068.4,123.0 Z" fill="#5f5f5f"/>
<rect x="1125.7" y="81.5" width="23.6" height="30.8" rx="3.0" fill="#fff" stroke="#757575" stroke-width="1"/><path d="M1125.2,85.8 L1125.2,84.0 Q1125.2,81.0 1128.2,81.0 L1146.8,81.0 Q1149.8,81.0 1149.8,84.0 L1149.8,85.8 Z" fill="#4a3791"/><path d="M1128.8,92.6 L1133.7,92.6 L1136.5,95.39999999999999 L1136.5,103.1 Q1136.5,104.3 1135.3,104.3 L1128.8,104.3 Q1127.6,104.3 1127.6,103.1 L1127.6,93.8 Q1127.6,92.6 1128.8,92.6 Z" fill="#fff" stroke="#8a8a8a" stroke-width="0.8" stroke-linejoin="round"/><path d="M1133.7,92.6 L1133.7,94.8 Q1133.7,95.39999999999999 1134.3,95.39999999999999 L1136.5,95.39999999999999" fill="none" stroke="#8a8a8a" stroke-width="0.7200000000000001"/><line x1="1129.5" y1="97.6" x2="1134.6999999999998" y2="97.6" stroke="#4a3791" stroke-width="0.9" stroke-linecap="butt"/><line x1="1129.5" y1="99.3" x2="1134.6999999999998" y2="99.3" stroke="#4a3791" stroke-width="0.9" stroke-linecap="butt"/><line x1="1129.5" y1="101.0" x2="1134.6999999999998" y2="101.0" stroke="#4a3791" stroke-width="0.9" stroke-linecap="butt"/><line x1="1129.5" y1="102.6" x2="1134.6999999999998" y2="102.6" stroke="#4a3791" stroke-width="0.9" stroke-linecap="butt"/><path d="M1139.7,92.6 L1144.6000000000001,92.6 L1147.4,95.39999999999999 L1147.4,103.1 Q1147.4,104.3 1146.2,104.3 L1139.7,104.3 Q1138.5,104.3 1138.5,103.1 L1138.5,93.8 Q1138.5,92.6 1139.7,92.6 Z" fill="#fff" stroke="#8a8a8a" stroke-width="0.8" stroke-linejoin="round"/><path d="M1144.6000000000001,92.6 L1144.6000000000001,94.8 Q1144.6000000000001,95.39999999999999 1145.2,95.39999999999999 L1147.4,95.39999999999999" fill="none" stroke="#8a8a8a" stroke-width="0.7200000000000001"/><line x1="1140.4" y1="97.6" x2="1145.6" y2="97.6" stroke="#4a3791" stroke-width="0.9" stroke-linecap="butt"/><line x1="1140.4" y1="99.3" x2="1145.6" y2="99.3" stroke="#4a3791" stroke-width="0.9" stroke-linecap="butt"/><line x1="1140.4" y1="101.0" x2="1145.6" y2="101.0" stroke="#4a3791" stroke-width="0.9" stroke-linecap="butt"/><line x1="1140.4" y1="102.6" x2="1145.6" y2="102.6" stroke="#4a3791" stroke-width="0.9" stroke-linecap="butt"/><path d="M1150.9,82.6 L1150.9,81.6 Q1150.9,81 1151.6,81 L1156.4,81 L1158.0,82.6 Z" fill="#b98a3c"/><rect x="1150.9" y="82.2" width="13.3" height="10.7" rx="0.8" fill="#e0a84e"/><path d="M1151.4,88.1 L1164.0,88.1" stroke="#8f8a86" stroke-width="1.3" stroke-dasharray="1.2 0.9"/><rect x="1151.2" y="88.6" width="1.1" height="2.0" fill="#6f6f78"/><path d="M1152.0,109.0 L1155.2,109.0 Q1158.4,109.0 1158.4,105.6 L1158.4,96.60000000000001" fill="none" stroke="#4a3791" stroke-width="2.5"/><path d="M1153.0,101.8 L1158.4,96.0 L1163.8000000000002,101.8" fill="none" stroke="#4a3791" stroke-width="2.5" stroke-linejoin="miter"/>
<path d="M1193.7,118.1 L1203.2,118.1 L1198.45,123.0 Z" fill="#5f5f5f"/>
<path d="M1271.9,80.9 Q1267.6,80.9 1264.0,82.6 Q1266.0,86.8 1270.2,89.1 Q1272.0,85.4 1271.9,80.9 Z" fill="#512da8"/><path d="M1262.5,83.1 Q1265.2,87.8 1269.9,90.3 Q1267.4,94.8 1263.4,98.0 Q1258.0,94.8 1255.1,89.4 Q1258.4,85.6 1262.5,83.1 Z" fill="#e8ae5b"/><circle cx="1262.4" cy="90.4" r="2.75" fill="#fff"/><path d="M1254.4,91.0 Q1257.2,95.8 1261.9,98.6 L1257.9,102.5 L1257.8,107.8 L1253.1,111.9 L1251.8,107.4 Q1247.0,106.4 1246.2,100.7 L1241.2,99.5 L1245.0,95.2 L1250.6,95.0 Z" fill="#512da8"/><path d="M1244.6,103.0 Q1242.0,107.0 1242.0,110.6 Q1246.0,110.4 1250.0,108.0 Q1246.4,108.9 1244.0,108.4 Q1243.6,106.0 1244.6,103.0 Z" fill="#512da8"/><path d="M1240.3,109.2 Q1239.7,111.6 1240.4,112.9 Q1242.0,113.0 1243.8,112.4 Q1241.4,111.9 1240.3,109.2 Z" fill="#512da8"/>
<rect x="1311.6" y="94.8" width="30.0" height="15.4" rx="2.6" fill="#fff" stroke="#a8a8a8" stroke-width="0.9"/><rect x="1312.9" y="96.1" width="27.4" height="12.8" rx="1.6" fill="none" stroke="#d0d0d0" stroke-width="0.6"/><path d="M1315.0,94.6 L1315.2,91.0 Q1315.6,86.2 1319.8,86.2 Q1322.6,86.2 1326.2,89.2 Q1329.6,91.8 1332.0,91.5 Q1336.4,90.8 1338.2,83.8" fill="none" stroke="#8c8c8c" stroke-width="0.7"/><path d="M1314.0,97.9 L1333.6,97.9" stroke="#a8a8a8" stroke-width="1.2" stroke-dasharray="1.1 1.25"/><path d="M1337.6,97.9 L1339.4,97.9" stroke="#a8a8a8" stroke-width="1.2" stroke-dasharray="1.1 1.25"/><path d="M1314.0,100.9 L1333.6,100.9" stroke="#a8a8a8" stroke-width="1.2" stroke-dasharray="1.1 1.25"/><path d="M1337.6,100.9 L1339.4,100.9" stroke="#a8a8a8" stroke-width="1.2" stroke-dasharray="1.1 1.25"/><path d="M1314.0,103.8 L1333.6,103.8" stroke="#a8a8a8" stroke-width="1.2" stroke-dasharray="1.1 1.25"/><path d="M1337.6,103.8 L1339.4,103.8" stroke="#a8a8a8" stroke-width="1.2" stroke-dasharray="1.1 1.25"/><path d="M1314.0,106.9 L1318.6,106.9" stroke="#a8a8a8" stroke-width="1.2" stroke-dasharray="1.1 1.25"/><path d="M1320.2,106.9 L1331.6,106.9" stroke="#a8a8a8" stroke-width="1.3"/><path d="M1334.2,106.9 L1339.4,106.9" stroke="#a8a8a8" stroke-width="1.2" stroke-dasharray="1.1 1.25"/><rect x="1327.2" y="99.4" width="4.4" height="4.2" fill="#a8a8a8" opacity="0.55"/>
<rect x="1396.2" y="82.2" width="23.5" height="26.6" rx="2.4" fill="#fff" stroke="#a0a0a0" stroke-width="1.6"/><rect x="1399.1" y="85.0" width="17.7" height="5.6" rx="0.8" fill="#a0a0a0"/><rect x="1399.1" y="94.2" width="3.8" height="3.7" fill="#a0a0a0"/><rect x="1406.0" y="94.2" width="3.8" height="3.7" fill="#a0a0a0"/><rect x="1413.0" y="94.2" width="3.8" height="3.7" fill="#a0a0a0"/><rect x="1399.1" y="100.3" width="3.8" height="3.8" fill="#a0a0a0"/><rect x="1406.0" y="100.3" width="3.8" height="3.8" fill="#a0a0a0"/><circle cx="1418.0" cy="105.9" r="7.3" fill="#fff"/><circle cx="1418.0" cy="105.9" r="6.0" fill="#fff" stroke="#a0a0a0" stroke-width="1.4"/><circle cx="1418.0" cy="105.9" r="3.6" fill="#a0a0a0"/><path d="M1418.0,105.9 L1422.4,102.6 L1422.4,105.9 Z" fill="#fff"/><path d="M1419.4,102.3 L1422.2,102.0 L1421.9,104.9" fill="none" stroke="#a0a0a0" stroke-width="0.9"/>
<path d="M90.8,170.9 L101.2,181.3 M101.2,170.9 L90.8,181.3" stroke="#9a9a9a" stroke-width="2.8" fill="none"/>
<path d="M115.0,175.0 L118.6,178.7 L125.0,172.2" stroke="#9a9a9a" stroke-width="2.7" fill="none"/>
<path d="M46.9,289.3 L51.5,293.90000000000003 L46.9,298.50000000000006" fill="none" stroke="#4527a0" stroke-width="1.6"/>
<path d="M69.0,289.3 L73.60000000000001,293.90000000000003 L69.0,298.50000000000006" fill="none" stroke="#4527a0" stroke-width="1.6"/>
<path d="M46.9,352.2 L51.5,356.8 L46.9,361.40000000000003" fill="none" stroke="#4527a0" stroke-width="1.6"/>
<path d="M69.0,352.2 L73.60000000000001,356.8 L69.0,361.40000000000003" fill="none" stroke="#4527a0" stroke-width="1.6"/>
<path d="M46.9,402.4 L51.5,407.0 L46.9,411.6" fill="none" stroke="#4527a0" stroke-width="1.6"/>
<path d="M69.0,402.4 L73.60000000000001,407.0 L69.0,411.6" fill="none" stroke="#4527a0" stroke-width="1.6"/>
<path d="M46.9,446.3 L51.5,450.90000000000003 L46.9,455.50000000000006" fill="none" stroke="#4527a0" stroke-width="1.6"/>
<path d="M69.0,446.3 L73.60000000000001,450.90000000000003 L69.0,455.50000000000006" fill="none" stroke="#4527a0" stroke-width="1.6"/>
<path d="M46.9,496.20000000000005 L51.5,500.80000000000007 L46.9,505.4000000000001" fill="none" stroke="#4527a0" stroke-width="1.6"/>
<path d="M69.0,496.20000000000005 L73.60000000000001,500.80000000000007 L69.0,505.4000000000001" fill="none" stroke="#4527a0" stroke-width="1.6"/>
<path d="M46.9,540.1 L51.5,544.7 L46.9,549.3000000000001" fill="none" stroke="#4527a0" stroke-width="1.6"/>
<path d="M69.0,540.1 L73.60000000000001,544.7 L69.0,549.3000000000001" fill="none" stroke="#4527a0" stroke-width="1.6"/>
<path d="M46.9,564.4 L51.5,569.0 L46.9,573.6" fill="none" stroke="#4527a0" stroke-width="1.6"/>
<path d="M44.3,246.2 L48.9,250.8 L53.5,246.2" fill="none" stroke="#fff" stroke-width="1.5"/>
<path d="M42.4,469.90000000000003 L40.6,469.90000000000003 Q39.9,469.90000000000003 39.9,470.6 L39.9,478.0 Q39.9,478.7 40.6,478.7 L47.9,478.7 Q48.599999999999994,478.7 48.599999999999994,478.0 L48.599999999999994,470.6 Q48.599999999999994,469.90000000000003 47.9,469.90000000000003 L46.1,469.90000000000003" fill="none" stroke="#cf4a30" stroke-width="1.2"/><path d="M42.4,471.2 L42.4,469.5 L43.4,469.5 Q44.25,467.90000000000003 45.1,469.5 L46.1,469.5 L46.1,471.2 Z" fill="none" stroke="#cf4a30" stroke-width="1.1" stroke-linejoin="round"/>
<path d="M42.4,520.1 L40.6,520.1 Q39.9,520.1 39.9,520.8 L39.9,528.2 Q39.9,528.9 40.6,528.9 L47.9,528.9 Q48.599999999999994,528.9 48.599999999999994,528.2 L48.599999999999994,520.8 Q48.599999999999994,520.1 47.9,520.1 L46.1,520.1" fill="none" stroke="#cf4a30" stroke-width="1.2"/><path d="M42.4,521.4 L42.4,519.7 L43.4,519.7 Q44.25,518.1 45.1,519.7 L46.1,519.7 L46.1,521.4 Z" fill="none" stroke="#cf4a30" stroke-width="1.1" stroke-linejoin="round"/>
<path d="M173.4,1016.3 L182.6,1025.5 M182.6,1016.3 L173.4,1025.5" stroke="#1a1a1a" stroke-width="1.4" fill="none"/></svg>
<div class="t" style="left:73.50px;top:11.00px;font-size:14px;line-height:18px;color:#212121;letter-spacing:0.147px;">Новая смета</div>
<div class="t" style="left:88.40px;top:39.00px;font-size:14px;line-height:18px;color:#212121;letter-spacing:-0.811px;font-weight:bold;">Главная</div>
<div class="t" style="left:188.50px;top:39.00px;font-size:14px;line-height:18px;color:#424242;letter-spacing:0.008px;">Вставка</div>
<div class="t" style="left:289.70px;top:39.00px;font-size:14px;line-height:18px;color:#424242;letter-spacing:-0.301px;">Объёмы</div>
<div class="t" style="left:390.40px;top:39.00px;font-size:14px;line-height:18px;color:#424242;letter-spacing:-0.011px;">Выполнение</div>
<div class="t" style="left:520.60px;top:39.00px;font-size:14px;line-height:18px;color:#424242;letter-spacing:-0.129px;">Вид</div>
<div class="t" style="left:595.20px;top:39.00px;font-size:14px;line-height:18px;color:#424242;letter-spacing:-0.295px;">Операции</div>
<div class="t" style="left:706.70px;top:39.00px;font-size:14px;line-height:18px;color:#424242;letter-spacing:-0.379px;">Отчет</div>
<div class="t" style="left:9.80px;top:113.00px;font-size:11px;line-height:15px;color:#212121;letter-spacing:0.189px;-webkit-text-stroke:0.35px currentColor;">Копировать</div>
<div class="t" style="left:88.00px;top:113.00px;font-size:11px;line-height:15px;color:#989898;letter-spacing:0.043px;-webkit-text-stroke:0.5px currentColor;">Вставить</div>
<div class="t" style="left:157.40px;top:113.00px;font-size:11px;line-height:15px;color:#212121;letter-spacing:0.144px;-webkit-text-stroke:0.35px currentColor;">Вырезать</div>
<div class="t" style="left:261.40px;top:72.00px;font-size:11px;line-height:15px;color:#212121;letter-spacing:0.038px;-webkit-text-stroke:0.35px currentColor;">Отменить</div>
<div class="t" style="left:261.40px;top:95.00px;font-size:11px;line-height:15px;color:#989898;letter-spacing:0.118px;-webkit-text-stroke:0.5px currentColor;">Повторить</div>
<div class="t" style="left:261.40px;top:118.00px;font-size:11px;line-height:15px;color:#212121;letter-spacing:0.056px;-webkit-text-stroke:0.35px currentColor;">Удалить</div>
<div class="t" style="left:379.20px;top:113.00px;font-size:11px;line-height:15px;color:#212121;letter-spacing:0.115px;-webkit-text-stroke:0.35px currentColor;">Базы</div>
<div class="t" style="left:446.20px;top:113.00px;font-size:11px;line-height:15px;color:#212121;letter-spacing:0.126px;-webkit-text-stroke:0.35px currentColor;">Сметы</div>
<div class="t" style="left:507.70px;top:113.00px;font-size:11px;line-height:15px;color:#212121;letter-spacing:0.375px;-webkit-text-stroke:0.35px currentColor;">Открытые</div>
<div class="t" style="left:602.00px;top:113.00px;font-size:11px;line-height:15px;color:#989898;letter-spacing:-0.259px;-webkit-text-stroke:0.5px currentColor;">Папка</div>
<div class="t" style="left:672.50px;top:113.00px;font-size:11px;line-height:15px;color:#989898;letter-spacing:-0.293px;-webkit-text-stroke:0.5px currentColor;">Смета</div>
<div class="t" style="left:755.80px;top:113.00px;font-size:11px;line-height:15px;color:#212121;letter-spacing:0.208px;-webkit-text-stroke:0.35px currentColor;">Поиск</div>
<div class="t" style="left:817.30px;top:113.00px;font-size:11px;line-height:15px;color:#989898;letter-spacing:0.129px;-webkit-text-stroke:0.5px currentColor;">Заменить</div>
<div class="t" style="left:894.90px;top:113.00px;font-size:11px;line-height:15px;color:#989898;letter-spacing:0.258px;-webkit-text-stroke:0.5px currentColor;">Импорт сметы</div>
<div class="t" style="left:980.40px;top:113.00px;font-size:11px;line-height:15px;color:#212121;letter-spacing:0.213px;-webkit-text-stroke:0.35px currentColor;">Экспорт сметы</div>
<div class="t" style="left:1089.80px;top:113.00px;font-size:11px;line-height:15px;color:#212121;letter-spacing:0.181px;-webkit-text-stroke:0.35px currentColor;">Пакетная выгрузка</div>
<div class="t" style="left:1102.50px;top:124.00px;font-size:11px;line-height:15px;color:#212121;letter-spacing:0.284px;-webkit-text-stroke:0.35px currentColor;">документации</div>
<div class="t" style="left:1229.20px;top:113.00px;font-size:11px;line-height:15px;color:#212121;letter-spacing:0.062px;-webkit-text-stroke:0.35px currentColor;">Справка о</div>
<div class="t" style="left:1226.40px;top:124.00px;font-size:11px;line-height:15px;color:#212121;letter-spacing:0.279px;-webkit-text-stroke:0.35px currentColor;">программе</div>
<div class="t" style="left:1305.80px;top:113.00px;font-size:11px;line-height:15px;color:#989898;letter-spacing:0.073px;">Горячие</div>
<div class="t" style="left:1303.70px;top:124.00px;font-size:11px;line-height:15px;color:#989898;letter-spacing:0.252px;">клавиши</div>
<div class="t" style="left:1387.00px;top:113.00px;font-size:11px;line-height:15px;color:#989898;letter-spacing:0.036px;">Сменить</div>
<div class="t" style="left:1398.00px;top:124.00px;font-size:11px;line-height:15px;color:#989898;letter-spacing:0.079px;">базу</div>
<div class="t" style="left:75.80px;top:139.00px;font-size:11px;line-height:15px;color:#6b6b6b;letter-spacing:-0.293px;">Буфер обмена</div>
<div class="t" style="left:245.30px;top:139.00px;font-size:11px;line-height:15px;color:#6b6b6b;letter-spacing:0.156px;">Редактирование</div>
<div class="t" style="left:423.40px;top:139.00px;font-size:11px;line-height:15px;color:#6b6b6b;letter-spacing:0.146px;">Мои документы</div>
<div class="t" style="left:632.50px;top:139.00px;font-size:11px;line-height:15px;color:#6b6b6b;letter-spacing:0.105px;">Создать</div>
<div class="t" style="left:792.70px;top:139.00px;font-size:11px;line-height:15px;color:#6b6b6b;letter-spacing:0.158px;">Поиск</div>
<div class="t" style="left:1007.70px;top:139.00px;font-size:11px;line-height:15px;color:#6b6b6b;letter-spacing:0.345px;">Импорт/экспорт</div>
<div class="t" style="left:1270.70px;top:139.00px;font-size:11px;line-height:15px;color:#6b6b6b;letter-spacing:0.029px;">Помощь</div>
<div class="t" style="left:42.60px;top:168.00px;font-size:11px;line-height:15px;color:#212121;">6</div>
<div class="t" style="left:136.10px;top:165.00px;font-size:18px;line-height:22px;color:#828282;letter-spacing:-0.194px;font-weight:bold;-webkit-text-stroke:0.3px currentColor;">fx</div>
<div class="t" style="left:162.80px;top:168.00px;font-size:11px;line-height:15px;color:#212121;">1</div>
<div class="t" style="left:56.70px;top:206.00px;font-size:12px;line-height:16px;color:#212121;letter-spacing:-0.588px;font-weight:bold;">№ п.п.</div>
<div class="t" style="left:122.50px;top:199.00px;font-size:12px;line-height:16px;color:#212121;letter-spacing:-0.413px;font-weight:bold;">Шифр расценки и коды</div>
<div class="t" style="left:163.10px;top:213.00px;font-size:12px;line-height:16px;color:#212121;letter-spacing:-0.538px;font-weight:bold;">ресурсов</div>
<div class="t" style="left:304.10px;top:206.00px;font-size:12px;line-height:16px;color:#212121;letter-spacing:-0.319px;font-weight:bold;">Наименование работ и затрат</div>
<div class="t" style="left:541.30px;top:206.00px;font-size:12px;line-height:16px;color:#212121;letter-spacing:-0.230px;font-weight:bold;">Ед. изм.</div>
<div class="t" style="left:632.20px;top:206.00px;font-size:12px;line-height:16px;color:#212121;letter-spacing:-0.371px;font-weight:bold;">Кол-во единиц</div>
<div class="t" style="left:751.20px;top:199.00px;font-size:12px;line-height:16px;color:#212121;letter-spacing:-0.179px;font-weight:bold;">Цена на ед.</div>
<div class="t" style="left:758.40px;top:213.00px;font-size:12px;line-height:16px;color:#212121;letter-spacing:-0.181px;font-weight:bold;">изм. руб.</div>
<div class="t" style="left:848.10px;top:206.00px;font-size:12px;line-height:16px;color:#212121;letter-spacing:-0.493px;font-weight:bold;">Поправочные коэфф.</div>
<div class="t" style="left:1000.60px;top:199.00px;font-size:12px;line-height:16px;color:#212121;letter-spacing:-0.582px;font-weight:bold;">Коэфф. Зимних</div>
<div class="t" style="left:1008.90px;top:213.00px;font-size:12px;line-height:16px;color:#212121;letter-spacing:-0.297px;font-weight:bold;">удорожаний</div>
<div class="t" style="left:1137.90px;top:199.00px;font-size:12px;line-height:16px;color:#212121;letter-spacing:-0.531px;font-weight:bold;">Коэф.</div>
<div class="t" style="left:1125.40px;top:213.00px;font-size:12px;line-height:16px;color:#212121;letter-spacing:-0.361px;font-weight:bold;">пересчета</div>
<div class="t" style="left:1226.00px;top:206.00px;font-size:12px;line-height:16px;color:#212121;letter-spacing:-0.380px;font-weight:bold;">ВСЕГО затрат, руб.</div>
<div class="t" style="left:59.00px;top:240.00px;font-size:11px;line-height:15px;color:#ffffff;letter-spacing:-0.272px;font-weight:bold;">Раздел 1.</div>
<div class="t" style="left:1293.20px;top:237.00px;font-size:11px;line-height:15px;color:#ffffff;letter-spacing:0.096px;font-weight:bold;">209 503,39</div>
<div class="t" style="left:98.00px;top:266.00px;font-size:11px;line-height:15px;color:#282828;">1</div>
<div class="t" style="left:124.20px;top:266.00px;font-size:11px;line-height:15px;color:#282828;letter-spacing:-0.080px;">2.2-2102-5-1/1</div>
<div class="t" style="left:274.20px;top:266.00px;font-size:11px;line-height:15px;color:#282828;letter-spacing:0.011px;">Определение повреждений на</div>
<div class="t" style="left:274.20px;top:279.00px;font-size:11px;line-height:15px;color:#282828;letter-spacing:0.065px;">трубопроводе</div>
<div class="t" style="left:524.30px;top:266.00px;font-size:11px;line-height:15px;color:#282828;letter-spacing:0.148px;">100 м</div>
<div class="t" style="left:703.60px;top:266.00px;font-size:11px;line-height:15px;color:#282828;letter-spacing:-0.431px;">4,00</div>
<div class="t" style="left:781.70px;top:266.00px;font-size:11px;line-height:15px;color:#282828;letter-spacing:-0.227px;">13 836,80</div>
<div class="t" style="left:1301.40px;top:266.00px;font-size:11px;line-height:15px;color:#282828;letter-spacing:-0.152px;">94 564,56</div>
<div class="t" style="left:119.30px;top:285.00px;font-size:11px;line-height:15px;color:#ababab;font-weight:bold;-webkit-text-stroke:0.3px currentColor;">К</div>
<div class="t" style="left:126.50px;top:291.00px;font-size:8px;line-height:12px;color:#ababab;font-weight:bold;-webkit-text-stroke:0.3px currentColor;">п</div>
<div class="t" style="left:98.00px;top:310.00px;font-size:11px;line-height:15px;color:#282828;">2</div>
<div class="t" style="left:124.20px;top:310.00px;font-size:11px;line-height:15px;color:#282828;letter-spacing:-0.090px;">2.2-2102-10-1/1</div>
<div class="t" style="left:274.20px;top:310.00px;font-size:11px;line-height:15px;color:#282828;letter-spacing:0.082px;">Измерение размеров объекта в</div>
<div class="t" style="left:274.20px;top:323.00px;font-size:11px;line-height:15px;color:#282828;letter-spacing:0.089px;">трубопроводе при помощи</div>
<div class="t" style="left:274.20px;top:336.00px;font-size:11px;line-height:15px;color:#282828;letter-spacing:0.140px;">робототехнического комплекса типа</div>
<div class="t" style="left:274.20px;top:349.00px;font-size:11px;line-height:15px;color:#282828;letter-spacing:-0.033px;">С-200, инженерное обеспечение</div>
<div class="t" style="left:524.30px;top:310.00px;font-size:11px;line-height:15px;color:#282828;letter-spacing:0.278px;">шт.</div>
<div class="t" style="left:703.60px;top:310.00px;font-size:11px;line-height:15px;color:#282828;letter-spacing:-0.431px;">4,00</div>
<div class="t" style="left:787.70px;top:310.00px;font-size:11px;line-height:15px;color:#282828;letter-spacing:-0.243px;">8 541,33</div>
<div class="t" style="left:1300.90px;top:310.00px;font-size:11px;line-height:15px;color:#282828;letter-spacing:-0.090px;">60 815,99</div>
<div class="t" style="left:119.30px;top:348.00px;font-size:11px;line-height:15px;color:#ababab;font-weight:bold;-webkit-text-stroke:0.3px currentColor;">К</div>
<div class="t" style="left:126.50px;top:354.00px;font-size:8px;line-height:12px;color:#ababab;font-weight:bold;-webkit-text-stroke:0.3px currentColor;">п</div>
<div class="t" style="left:98.00px;top:373.00px;font-size:11px;line-height:15px;color:#282828;">3</div>
<div class="t" style="left:124.20px;top:373.00px;font-size:11px;line-height:15px;color:#282828;letter-spacing:-0.073px;">2.2-2103-1-2/1</div>
<div class="t" style="left:274.20px;top:373.00px;font-size:11px;line-height:15px;color:#282828;letter-spacing:0.048px;">Техническое обслуживание фланцевых</div>
<div class="t" style="left:274.20px;top:386.00px;font-size:11px;line-height:15px;color:#282828;letter-spacing:0.138px;">соединений трубопроводов диаметром</div>
<div class="t" style="left:274.20px;top:399.00px;font-size:11px;line-height:15px;color:#282828;letter-spacing:0.090px;">100-200 мм</div>
<div class="t" style="left:524.30px;top:373.00px;font-size:11px;line-height:15px;color:#282828;letter-spacing:0.278px;">шт.</div>
<div class="t" style="left:703.60px;top:373.00px;font-size:11px;line-height:15px;color:#282828;letter-spacing:-0.431px;">1,00</div>
<div class="t" style="left:787.70px;top:373.00px;font-size:11px;line-height:15px;color:#282828;letter-spacing:-0.243px;">1 485,45</div>
<div class="t" style="left:1306.90px;top:373.00px;font-size:11px;line-height:15px;color:#282828;letter-spacing:-0.086px;">2 489,74</div>
<div class="t" style="left:119.30px;top:398.00px;font-size:11px;line-height:15px;color:#ababab;font-weight:bold;-webkit-text-stroke:0.3px currentColor;">К</div>
<div class="t" style="left:126.50px;top:404.00px;font-size:8px;line-height:12px;color:#ababab;font-weight:bold;-webkit-text-stroke:0.3px currentColor;">п</div>
<div class="t" style="left:98.00px;top:423.00px;font-size:11px;line-height:15px;color:#282828;">4</div>
<div class="t" style="left:124.20px;top:423.00px;font-size:11px;line-height:15px;color:#282828;letter-spacing:-0.090px;">2.10-2101-2-1/1</div>
<div class="t" style="left:274.20px;top:423.00px;font-size:11px;line-height:15px;color:#282828;letter-spacing:0.154px;">Технический осмотр пункта питания</div>
<div class="t" style="left:274.20px;top:436.00px;font-size:11px;line-height:15px;color:#282828;letter-spacing:0.126px;">наружного освещения</div>
<div class="t" style="left:524.30px;top:423.00px;font-size:11px;line-height:15px;color:#282828;letter-spacing:0.278px;">шт.</div>
<div class="t" style="left:703.60px;top:423.00px;font-size:11px;line-height:15px;color:#282828;letter-spacing:-0.431px;">1,00</div>
<div class="t" style="left:787.80px;top:423.00px;font-size:11px;line-height:15px;color:#282828;letter-spacing:-0.257px;">1 187,15</div>
<div class="t" style="left:1307.10px;top:423.00px;font-size:11px;line-height:15px;color:#282828;letter-spacing:-0.114px;">1 948,38</div>
<div class="t" style="left:119.30px;top:442.00px;font-size:11px;line-height:15px;color:#ababab;font-weight:bold;-webkit-text-stroke:0.3px currentColor;">К</div>
<div class="t" style="left:126.50px;top:448.00px;font-size:8px;line-height:12px;color:#ababab;font-weight:bold;-webkit-text-stroke:0.3px currentColor;">п</div>
<div class="t" style="left:98.00px;top:467.00px;font-size:11px;line-height:15px;color:#282828;">5</div>
<div class="t" style="left:124.20px;top:467.00px;font-size:11px;line-height:15px;color:#282828;letter-spacing:-0.073px;">2.2-2101-6-1/1</div>
<div class="t" style="left:274.20px;top:467.00px;font-size:11px;line-height:15px;color:#282828;letter-spacing:-0.022px;">Диагностика трубопроводов тепловых</div>
<div class="t" style="left:274.20px;top:480.00px;font-size:11px;line-height:15px;color:#282828;letter-spacing:0.147px;">методом гелиодиагностики на</div>
<div class="t" style="left:274.20px;top:493.00px;font-size:11px;line-height:15px;color:#282828;letter-spacing:0.125px;">трубопроводе диаметром свыше 600 мм</div>
<div class="t" style="left:524.30px;top:467.00px;font-size:11px;line-height:15px;color:#282828;letter-spacing:0.148px;">100 м</div>
<div class="t" style="left:703.60px;top:467.00px;font-size:11px;line-height:15px;color:#282828;letter-spacing:-0.431px;">1,00</div>
<div class="t" style="left:781.00px;top:467.00px;font-size:11px;line-height:15px;color:#282828;letter-spacing:-0.140px;">27 097,71</div>
<div class="t" style="left:1301.00px;top:467.00px;font-size:11px;line-height:15px;color:#282828;letter-spacing:-0.102px;">47 131,73</div>
<div class="t" style="left:119.30px;top:492.00px;font-size:11px;line-height:15px;color:#ababab;font-weight:bold;-webkit-text-stroke:0.3px currentColor;">К</div>
<div class="t" style="left:126.50px;top:498.00px;font-size:8px;line-height:12px;color:#ababab;font-weight:bold;-webkit-text-stroke:0.3px currentColor;">п</div>
<div class="t" style="left:98.00px;top:517.00px;font-size:11px;line-height:15px;color:#282828;">6</div>
<div class="t" style="left:124.20px;top:517.00px;font-size:11px;line-height:15px;color:#282828;letter-spacing:-0.073px;">2.2-2102-1-1/1</div>
<div class="t" style="left:274.20px;top:517.00px;font-size:11px;line-height:15px;color:#282828;letter-spacing:0.163px;">Диагностика существующих</div>
<div class="t" style="left:274.20px;top:530.00px;font-size:11px;line-height:15px;color:#282828;letter-spacing:0.109px;">трубопроводов</div>
<div class="t" style="left:524.30px;top:517.00px;font-size:11px;line-height:15px;color:#282828;">10 м</div>
<div class="t" style="left:703.60px;top:517.00px;font-size:11px;line-height:15px;color:#282828;letter-spacing:-0.431px;">1,00</div>
<div class="t" style="left:787.80px;top:517.00px;font-size:11px;line-height:15px;color:#282828;letter-spacing:-0.257px;">1 463,66</div>
<div class="t" style="left:1307.10px;top:517.00px;font-size:11px;line-height:15px;color:#282828;letter-spacing:-0.114px;">2 552,99</div>
<div class="t" style="left:119.30px;top:536.00px;font-size:11px;line-height:15px;color:#ababab;font-weight:bold;-webkit-text-stroke:0.3px currentColor;">К</div>
<div class="t" style="left:126.50px;top:542.00px;font-size:8px;line-height:12px;color:#ababab;font-weight:bold;-webkit-text-stroke:0.3px currentColor;">п</div>
<div class="t" style="left:274.20px;top:561.00px;font-size:11px;line-height:15px;color:#282828;letter-spacing:-0.031px;">Всего</div>
<div class="t" style="left:1293.00px;top:563.00px;font-size:11px;line-height:15px;color:#212121;letter-spacing:0.107px;font-weight:bold;">209 503,39</div>
<div class="t" style="left:60.80px;top:465.00px;font-size:12px;line-height:16px;color:#ffffff;letter-spacing:0.188px;-webkit-text-stroke:0.35px currentColor;z-index:30;">Параметры строки отличаются от параметров карточки: нормативные базы</div>
<div class="t" style="left:81.40px;top:1012.00px;font-size:13px;line-height:17px;color:#212121;letter-spacing:0.175px;font-weight:bold;">Новая смета</div>
<div class="t" style="left:1337.30px;top:1011.00px;font-size:13px;line-height:17px;color:#212121;letter-spacing:-0.098px;font-weight:bold;">Всего</div>
<div class="t" style="left:1392.90px;top:1012.00px;font-size:13px;line-height:17px;color:#212121;letter-spacing:0.430px;">209 503,39 ₽</div>
<div class="t" style="left:1754.90px;top:209.90px;font-size:12px;line-height:16px;color:#212121;transform-origin:0 0;transform:rotate(90deg);letter-spacing:0.086px;">Расчет</div>
<div class="t" style="left:1754.90px;top:281.80px;font-size:12px;line-height:16px;color:#212121;transform-origin:0 0;transform:rotate(90deg);letter-spacing:0.093px;">Структура</div>
<div class="b" style="left:55.5px;top:460px;width:445.5px;height:26.5px;background:rgba(97,97,97,0.92);border-radius:1px 4px 4px 2px;z-index:20;box-shadow:0 1px 4px rgba(0,0,0,0.18);"></div>
<div class="b" style="left:32.5px;top:459.1px;width:17.8px;height:20.3px;border:3px solid #ff0000;z-index:25;"></div>
<div class="b" style="left:33.6px;top:512.5px;width:18.7px;height:17.2px;border:3px solid #ff0000;z-index:25;"></div>
<svg style="left:0;top:0;z-index:26" width="100" height="520" viewBox="0 0 100 520"><line x1="17.5" y1="420" x2="34" y2="441.5" stroke="#ff0000" stroke-width="2.6"/><polygon points="25.7,443.6 37.6,434.4 45.7,457.6" fill="#ff0000"/></svg>
<div class="b" style="left:0;top:0;width:1755px;height:1035px;border:1px solid #6e6e6e;border-radius:0 0 5px 5px;z-index:40;pointer-events:none;box-shadow:0 0 0 6px #707880;"></div>
</div></body></html>
